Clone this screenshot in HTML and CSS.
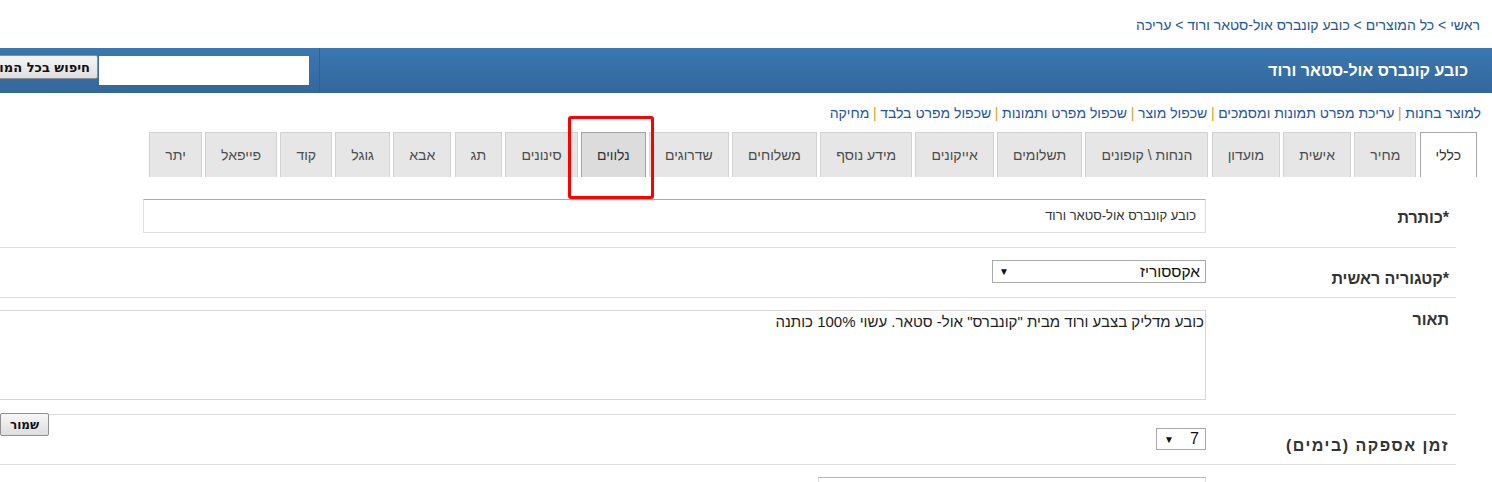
FILE: index.html
```html
<!DOCTYPE html>
<html dir="rtl" lang="he">
<head>
<meta charset="utf-8">
<title>עריכה</title>
<link rel="stylesheet" href="styles.css">
</head>
<body>
<div class="page">
  <div class="crumbs">
    <a href="#">ראשי</a> &gt; <a href="#">כל המוצרים</a> &gt; <a href="#">כובע קונברס אול-סטאר ורוד</a> &gt; <a href="#">עריכה</a>
  </div>
  <div class="bar">
    <h1 class="bar-title">כובע קונברס אול-סטאר ורוד</h1>
    <div class="search">
      <input class="search-input" type="text">
      <button class="search-btn" type="button">חיפוש בכל המוצרים</button>
    </div>
  </div>
  <div class="actions">
    <a href="#">למוצר בחנות</a><span class="sep">|</span><a href="#">עריכת מפרט תמונות ומסמכים</a><span class="sep">|</span><a href="#">שכפול מוצר</a><span class="sep">|</span><a href="#">שכפול מפרט ותמונות</a><span class="sep">|</span><a href="#">שכפול מפרט בלבד</a><span class="sep">|</span><a href="#">מחיקה</a>
  </div>
  <div class="tabs">
    <div class="tab active">כללי</div>
    <div class="tab">מחיר</div>
    <div class="tab">אישית</div>
    <div class="tab">מועדון</div>
    <div class="tab">הנחות \ קופונים</div>
    <div class="tab">תשלומים</div>
    <div class="tab">אייקונים</div>
    <div class="tab">מידע נוסף</div>
    <div class="tab">משלוחים</div>
    <div class="tab">שדרוגים</div>
    <div class="tab hover">נלווים</div>
    <div class="tab">סינונים</div>
    <div class="tab">תג</div>
    <div class="tab">אבא</div>
    <div class="tab">גוגל</div>
    <div class="tab">קוד</div>
    <div class="tab">פייפאל</div>
    <div class="tab">יתר</div>
  </div>
  <div class="highlight"></div>
  <div class="form">
    <div class="row">
      <div class="label">*כותרת</div>
      <div class="field"><div class="text-input title-input">כובע קונברס אול-סטאר ורוד</div></div>
    </div>
    <div class="row">
      <div class="label">*קטגוריה ראשית</div>
      <div class="field"><div class="select cat-select"><span>אקססוריז</span><span class="arrow">▼</span></div></div>
    </div>
    <div class="row">
      <div class="label label-top">תאור</div>
      <div class="field"><div class="textarea">כובע מדליק בצבע ורוד מבית "קונברס" אול- סטאר. עשוי 100% כותנה</div></div>
    </div>
    <div class="row">
      <div class="label label-wide">זמן אספקה (בימים)</div>
      <div class="field"><div class="select days-select"><span>7</span><span class="arrow">▼</span></div></div>
    </div>
    <div class="row">
      <div class="label"></div>
      <div class="field"><div class="text-input next-input"></div></div>
    </div>
  </div>
  <button class="save-btn" type="button">שמור</button>
</div>
</body>
</html>
```
FILE: styles.css
```css
html, body {
  margin: 0;
  padding: 0;
  overflow: hidden;
  background: #fff;
}
body {
  font-family: "Liberation Sans", Arial, sans-serif;
  font-size: 13px;
  color: #333;
}
.page {
  position: relative;
  width: 1492px;
  height: 482px;
  overflow: hidden;
}
a {
  color: #2456a6;
  text-decoration: none;
}
.crumbs {
  height: 48px;
  box-sizing: border-box;
  padding: 17px 12px 0 0;
  line-height: 17px;
  font-size: 14px;
  color: #2456a6;
}
.bar {
  height: 45px;
  display: flex;
  align-items: center;
  background: linear-gradient(#3b77b1, #33679c);
}
.bar-title {
  margin: 0;
  padding-right: 24px;
  flex: 1;
  font-size: 16px;
  font-weight: bold;
  color: #fff;
  white-space: nowrap;
}
.search {
  flex: 0 0 320px;
  min-width: 0;
  height: 45px;
  box-sizing: border-box;
  display: flex;
  align-items: flex-start;
  padding-top: 8px;
  padding-right: 10px;
  border-right: 1px solid #2f6194;
}
.search-input {
  flex: 0 0 auto;
  width: 210px;
  height: 29px;
  box-sizing: border-box;
  border: 0;
  margin: 0;
  padding: 0;
  background: #fff;
}
.search-btn {
  flex: 0 0 auto;
  height: 24px;
  margin: -1px 1px 0 0;
  padding: 0 7px;
  box-sizing: border-box;
  border: 1px solid #8a8a8a;
  border-radius: 2px;
  background: linear-gradient(#f6f6f6, #dedede);
  font-family: "DejaVu Sans", sans-serif;
  font-size: 13px;
  font-weight: bold;
  color: #111;
  white-space: nowrap;
}
.actions {
  height: 39px;
  box-sizing: border-box;
  padding: 12px 11px 0 0;
  line-height: 16px;
  font-size: 14px;
}
.sep {
  color: #d5a11e;
  margin: 0 3.6px;
}
.tabs {
  display: flex;
  gap: 3.3px;
  padding-right: 15px;
  height: 45px;
}
.tab {
  height: 45px;
  box-sizing: border-box;
  padding: 0 15px;
  display: flex;
  align-items: center;
  background: #e6e6e6;
  border: 1px solid #d2d2d2;
  border-bottom: 0;
  font-size: 14px;
  color: #4d4d4d;
  white-space: nowrap;
}
.tab.active {
  background: #fff;
  border-color: #a9a9a9;
  color: #333;
}
.tab.hover {
  background: #dcdcdc;
  border-color: #a2a2a2;
  color: #333;
}
.highlight {
  position: absolute;
  left: 568px;
  top: 116px;
  width: 86px;
  height: 83px;
  box-sizing: border-box;
  border: 3px solid #f00;
  border-radius: 3px;
}
.form {
  margin: 10px 36px 0 -60px;
}
.row {
  display: flex;
  border-bottom: 1px solid #dcdcdc;
}
.label {
  flex: 0 0 250px;
  box-sizing: border-box;
  padding: 22px 7px 0 0;
  font-size: 16px;
  font-weight: bold;
  line-height: 18px;
  color: #333;
}
.label-top {
  padding-top: 13px;
}
.label-wide {
  letter-spacing: 1.5px;
}
.field {
  flex: 1;
  display: flex;
  align-items: flex-start;
  padding: 12px 0 14px;
}
.text-input {
  box-sizing: border-box;
  height: 34px;
  border: 1px solid #dddddd;
  border-top-color: #ababab;
  padding: 0 9px;
  line-height: 32px;
  font-size: 13px;
  color: #333;
}
.title-input {
  width: 1063px;
}
.next-input {
  width: 388px;
  border-top-color: #bbb;
}
.select {
  box-sizing: border-box;
  display: flex;
  justify-content: space-between;
  align-items: center;
  border: 1px solid #a9a9a9;
  background: #fff;
  font-size: 15.5px;
  color: #111;
}
.arrow {
  font-size: 10px;
  color: #111;
}
.cat-select {
  width: 214px;
  height: 23px;
  padding: 0 5px 0 6px;
}
.days-select {
  width: 50px;
  height: 22px;
  margin-top: 1px;
  padding: 0 6px 0 7px;
  font-size: 16px;
}
.textarea {
  box-sizing: border-box;
  width: 1300px;
  height: 90px;
  border: 1px solid #d6d6d6;
  padding: 2px 1px 0 0;
  font-size: 15px;
  line-height: 18px;
  color: #222;
}
.save-btn {
  position: absolute;
  left: 0;
  top: 413px;
  height: 23px;
  width: 49px;
  margin: 0;
  padding: 0;
  border: 1px solid #8f8f8f;
  border-radius: 2px;
  background: linear-gradient(#f7f7f7, #dddddd);
  font-family: "DejaVu Sans", sans-serif;
  font-size: 12px;
  font-weight: bold;
  color: #111;
}
```
